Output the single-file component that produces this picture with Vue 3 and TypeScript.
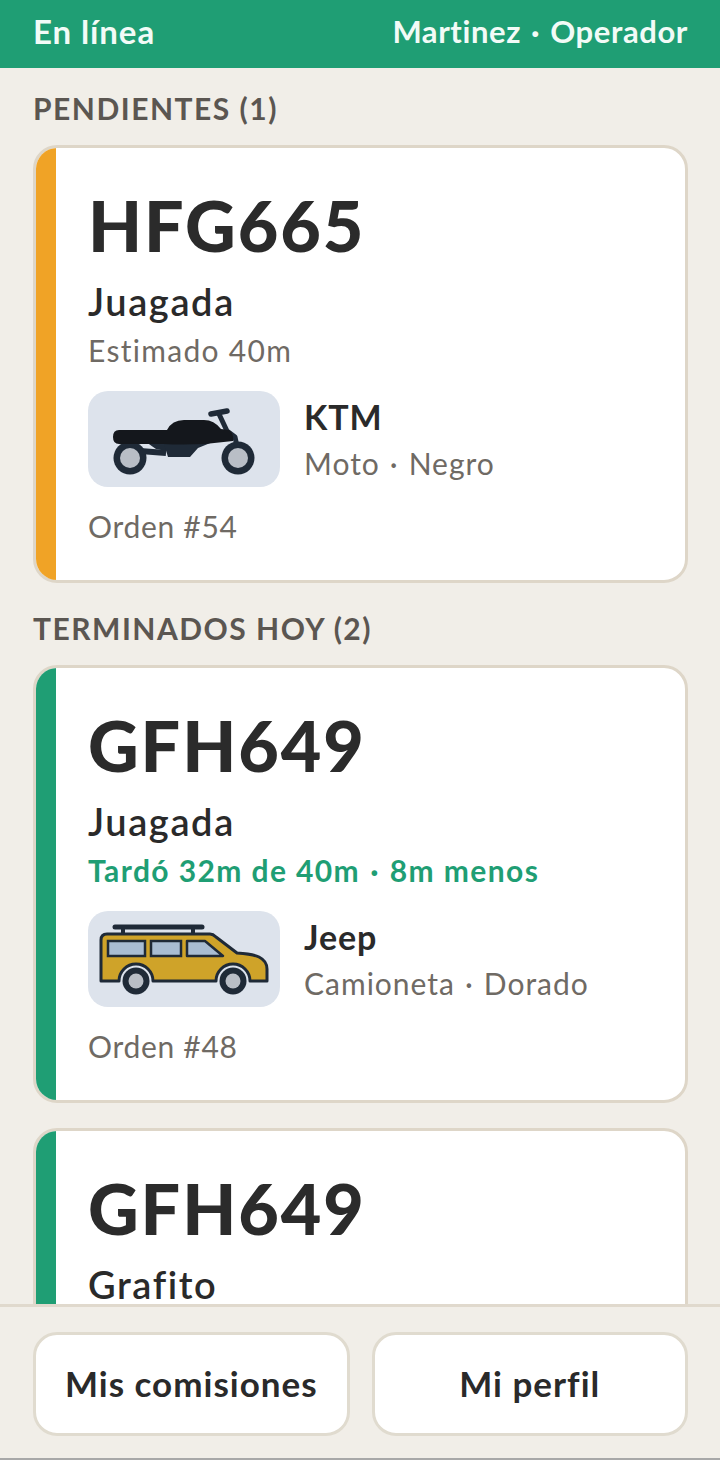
<script setup lang="ts">
interface Job {
  plate: string
  service: string
  detail: string[]
  done: boolean
  brand: string
  type: string
  color: string
  order: string
  icon: 'moto' | 'jeep' | ''
}
const pending: Job[] = [
  { plate: 'HFG665', service: 'Juagada', detail: ['Estimado 40m'], done: false, brand: 'KTM', type: 'Moto', color: 'Negro', order: 'Orden #54', icon: 'moto' },
]
const finished: Job[] = [
  { plate: 'GFH649', service: 'Juagada', detail: ['Tardó 32m de 40m', '8m menos'], done: true, brand: 'Jeep', type: 'Camioneta', color: 'Dorado', order: 'Orden #48', icon: 'jeep' },
  { plate: 'GFH649', service: 'Grafito', detail: [], done: true, brand: '', type: '', color: '', order: '', icon: '' },
]
const groups = [
  { title: 'PENDIENTES (1)', jobs: pending },
  { title: 'TERMINADOS HOY (2)', jobs: finished },
]
</script>

<template>
  <div class="app">
    <header class="top">
      <span class="status">En línea</span>
      <span class="user">Martinez<span class="dot">·</span>Operador</span>
    </header>
    <main class="list">
      <section v-for="g in groups" :key="g.title" class="group">
        <h2 class="label">{{ g.title }}</h2>
        <article v-for="(j, i) in g.jobs" :key="i" class="card" :class="{ done: j.done }">
          <div class="bar"></div>
          <div class="body">
            <div class="plate">{{ j.plate }}</div>
            <div class="service">{{ j.service }}</div>
            <div v-if="j.detail.length" class="detail">
              <template v-for="(part, k) in j.detail" :key="k"><span v-if="k > 0" class="dot">·</span>{{ part }}</template>
            </div>
            <div v-if="j.icon" class="vehicle">
              <div class="thumb">
                <svg v-if="j.icon === 'moto'" width="192" height="96" viewBox="0 0 192 96">
                  <circle cx="42" cy="67" r="16.5" fill="#1f2a37" />
                  <circle cx="150" cy="67" r="16.5" fill="#1f2a37" />
                  <path d="M52 60 L78 62" stroke="#1f2a37" stroke-width="6" />
                  <path d="M58 51 L68 58 L78 60 V51 Z" fill="#1f2a37" />
                  <path d="M75 50 L80 66 H102 L110 57 L132 48 Z" fill="#1f2a37" />
                  <path d="M131 23 L139 40 L147 46 L150 60" fill="none" stroke="#1f2a37" stroke-width="5" stroke-linejoin="round" />
                  <path d="M123 23 L139 20" fill="none" stroke="#1f2a37" stroke-width="5.5" stroke-linecap="round" />
                  <circle cx="42" cy="67" r="10" fill="#b9bec6" />
                  <circle cx="150" cy="67" r="10" fill="#b9bec6" />
                  <path d="M31 39 H79 Q84 29 96 29 H116 Q126 29 133 38 L141 39 Q146 42 145 50 Q110 55 75 53 H31 Q25 53 25 46 Q25 39 31 39 Z" fill="#14171c" />
                </svg>
                <svg v-else width="192" height="96" viewBox="0 0 192 96">
                  <path d="M27 16 H114" stroke="#1f2a37" stroke-width="5" stroke-linecap="round" />
                  <path d="M35 16 V24 M105 16 V24" stroke="#1f2a37" stroke-width="4" />
                  <path d="M19 23 H122 Q125 23 128 26 L149 42 Q165 43 171 46 Q179 50 179 58 V70 H162 A17 17 0 0 0 128 70 H65 A17 17 0 0 0 31 70 H13 V29 Q13 23 19 23 Z" fill="#cfa329" stroke="#1f2a37" stroke-width="3" stroke-linejoin="round" />
                  <rect x="20" y="30" width="37" height="15" fill="#a9bdd2" stroke="#1f2a37" stroke-width="2.5" />
                  <rect x="63" y="30" width="30" height="15" fill="#a9bdd2" stroke="#1f2a37" stroke-width="2.5" />
                  <path d="M99 30 H117 L135 45 H99 Z" fill="#a9bdd2" stroke="#1f2a37" stroke-width="2.5" stroke-linejoin="round" />
                  <circle cx="48" cy="70" r="13.5" fill="#1f2a37" />
                  <circle cx="145" cy="70" r="13.5" fill="#1f2a37" />
                  <circle cx="48" cy="70" r="7.5" fill="#b9bec6" />
                  <circle cx="145" cy="70" r="7.5" fill="#b9bec6" />
                </svg>
              </div>
              <div class="vinfo">
                <div class="brand">{{ j.brand }}</div>
                <div class="meta">{{ j.type }}<span class="dot">·</span>{{ j.color }}</div>
              </div>
            </div>
            <div v-if="j.order" class="order">{{ j.order }}</div>
          </div>
        </article>
      </section>
    </main>
    <footer class="foot">
      <button class="btn">Mis comisiones</button>
      <button class="btn">Mi perfil</button>
    </footer>
  </div>
</template>

<style>
html, body { margin: 0; background: #f1eee8; }
</style>

<style scoped>
.app {
  width: 720px;
  height: 1460px;
  display: flex;
  flex-direction: column;
  overflow: hidden;
  background: #f1eee8;
  font-family: Lato, "Noto Sans", sans-serif;
  color: #2a2a2a;
}
.dot { margin: 0 10px; font-weight: 700; }
.top {
  height: 68px;
  flex: none;
  box-sizing: border-box;
  padding: 0 32px 6px 33px;
  display: flex;
  align-items: center;
  justify-content: space-between;
  background: #1f9e74;
  color: #f2fbf7;
  font-size: 31px;
  font-weight: 700;
  letter-spacing: 0.6px;
}
.status { font-size: 33px; letter-spacing: 0.9px; }
.list {
  flex: 1;
  min-height: 0;
  overflow: hidden;
  padding: 0 32px 0 33px;
}
.group { display: flex; flex-direction: column; }
.label {
  margin: 0;
  height: 77px;
  box-sizing: border-box;
  padding-top: 21px;
  line-height: 38px;
  font-size: 30px;
  font-weight: 700;
  letter-spacing: 1.5px;
  color: #5b5651;
}
.group + .group .label { height: 82px; padding-top: 26px; }
.card {
  flex: none;
  height: 438px;
  box-sizing: border-box;
  display: flex;
  border: 3px solid #ded6c8;
  border-radius: 24px;
  background: #fff;
  overflow: hidden;
}
.card + .card { margin-top: 25px; }
.bar { width: 20px; flex: none; background: #f0a326; }
.done .bar { background: #1f9e74; }
.body { flex: 1; padding: 35px 0 0 32px; min-width: 0; }
.plate {
  font-size: 70px;
  line-height: 84px;
  font-weight: 900;
  letter-spacing: 1.9px;
  color: #2b2b2b;
}
.service {
  margin-top: 12px;
  font-size: 38px;
  line-height: 44px;
  font-weight: 600;
  letter-spacing: 1.6px;
}
.detail {
  margin-top: 7px;
  font-size: 30px;
  line-height: 40px;
  letter-spacing: 1.3px;
  color: #6f6a64;
}
.done .detail { color: #1f9e74; font-weight: 700; letter-spacing: 1.4px; }
.vehicle {
  margin-top: 21px;
  display: flex;
  align-items: center;
  gap: 24px;
}
.thumb {
  width: 192px;
  height: 96px;
  flex: none;
  border-radius: 20px;
  background: #dde3ec;
}
.thumb svg { display: block; }
.brand {
  font-size: 34px;
  line-height: 44px;
  font-weight: 700;
  letter-spacing: 0.9px;
}
.meta {
  margin-top: 4px;
  font-size: 30px;
  line-height: 40px;
  letter-spacing: 1px;
  color: #6f6a64;
}
.meta .dot { font-weight: 400; }
.order {
  margin-top: 19px;
  font-size: 30px;
  line-height: 40px;
  letter-spacing: 0.7px;
  color: #6f6a64;
}
.foot {
  flex: none;
  height: 156px;
  box-sizing: border-box;
  border-top: 3px solid #e0d9cd;
  padding: 25px 32px 0 33px;
  display: grid;
  grid-template-columns: 1fr 1fr;
  gap: 22px;
  background: #f1eee8;
  border-bottom: 2px solid #a8a8a8;
}
.btn {
  height: 104px;
  box-sizing: border-box;
  border: 3px solid #e0dbcf;
  border-radius: 24px;
  background: #fff;
  font-family: inherit;
  font-size: 35px;
  font-weight: 700;
  letter-spacing: 1px;
  color: #2a2a2a;
  padding: 0 0 2px;
}
</style>
